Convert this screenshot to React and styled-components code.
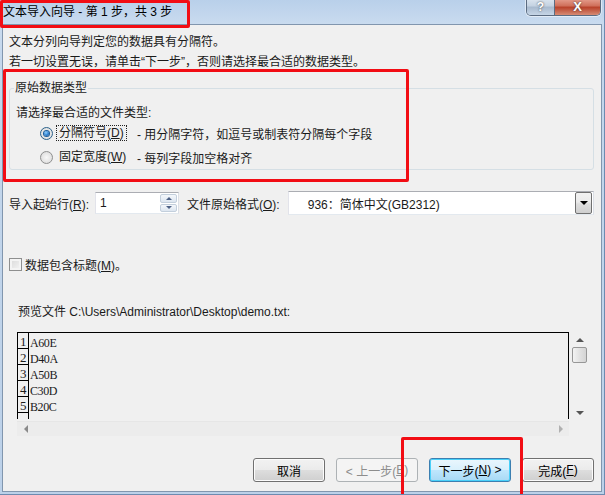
import React from "react";
import styled, { createGlobalStyle, css } from "styled-components";

const GlobalStyle = createGlobalStyle`
  html, body { margin: 0; padding: 0; background: #c4d7ec; }
  body { font-family: "Liberation Sans", "Noto Sans CJK SC", sans-serif; font-size: 12px; color: #1a1a1a; }
`;

const Window = styled.div`
  position: relative;
  width: 605px;
  height: 495px;
  box-sizing: border-box;
  display: flex;
  flex-direction: column;
  overflow: hidden;
  background: linear-gradient(180deg, #b9d0ea 0px, #c9dbef 24px, #c4d7ec 60px, #bcd1e9 100%);
  border-right: 1px solid #6d8bb0;
  border-bottom: 1px solid #6d8bb0;
`;

const TitleBar = styled.div`
  height: 24px;
  flex: none;
  display: flex;
  align-items: flex-start;
  padding: 0 3px 0 3px;
`;

const Title = styled.div`
  flex: 1;
  line-height: 24px;
  font-size: 12px;
  color: #000;
  white-space: pre;
`;

const Caption = styled.div`
  display: flex;
  margin-top: -2px;
  border: 1px solid #5b6b80;
  border-top: none;
  border-radius: 0 0 5px 5px;
  overflow: hidden;
  box-shadow: 0 0 0 1px rgba(255, 255, 255, 0.5);
`;

const CapButton = styled.div`
  height: 17px;
  display: flex;
  align-items: center;
  justify-content: center;
  font-family: "Liberation Sans", sans-serif;
  font-weight: bold;
  color: #fff;
  text-shadow: 0 0 2px #333;
  ${(p) =>
    p.$close
      ? css`
          width: 45px;
          font-size: 13px;
          background: linear-gradient(180deg, #e8a595 0%, #d0715c 45%, #b9432b 55%, #d68b74 100%);
        `
      : css`
          width: 27px;
          font-size: 12px;
          border-right: 1px solid #5b6b80;
          background: linear-gradient(180deg, #dfe8f1 0%, #c5d3e2 45%, #a9bbcf 55%, #c6d5e6 100%);
        `}
`;

const Client = styled.div`
  flex: 1;
  margin: 0 2px 2px 2px;
  border: 1px solid #8196ae;
  background: #f0f0f0;
  display: flex;
  flex-direction: column;
  padding: 7px 7px 9px 6px;
  font-family: "Liberation Sans", "Noto Sans CJK SC", sans-serif;
  font-size: 12px;
`;

const Line = styled.div`
  line-height: 20px;
  white-space: pre;
`;

const Group = styled.fieldset`
  margin: 8px 0 0 0;
  padding: 0;
  border: 1px solid #d5dfe5;
  border-radius: 3px;
  min-width: 0;
`;

const Legend = styled.legend`
  margin-left: 4px;
  padding: 0 1px;
  line-height: 16px;
`;

const GroupBody = styled.div`
  padding: 7px 0 2px 6px;
  display: flex;
  flex-direction: column;
`;

const RadioRow = styled.div`
  display: grid;
  grid-template-columns: 13px 84px auto;
  align-items: center;
  height: 20px;
  padding-left: 24px;
  margin-bottom: ${(p) => (p.$last ? "0" : "4px")};
`;

const Radio = styled.span`
  width: 11px;
  height: 11px;
  border-radius: 50%;
  border: 1px solid ${(p) => (p.$checked ? "#2c628b" : "#8e8f8f")};
  background: radial-gradient(circle at 50% 50%, #f8f8f8 0%, #e4e4e4 60%, #d2d2d2 100%);
  display: flex;
  align-items: center;
  justify-content: center;
  &::after {
    content: "";
    display: ${(p) => (p.$checked ? "block" : "none")};
    width: 5px;
    height: 5px;
    border-radius: 50%;
    background: radial-gradient(circle at 40% 35%, #8ed0ff 0%, #2c7fd0 55%, #0e4a8a 100%);
    box-shadow: 0 0 0 1px #1d5e99;
  }
`;

const RadioLabel = styled.span`
  justify-self: start;
  margin-left: 3px;
  padding: 0 2px;
  line-height: 12px;
  height: 13px;
  border: 1px dotted ${(p) => (p.$focus ? "#222" : "transparent")};
  white-space: pre;
`;

const Acc = styled.span`
  text-decoration: underline;
`;

const FieldRow = styled.div`
  display: flex;
  align-items: center;
  height: 24px;
  margin-top: 21px;
`;

const FieldLabel = styled.span`
  white-space: pre;
  margin-right: ${(p) => p.$gap}px;
`;

const Spin = styled.div`
  width: 84px;
  height: 22px;
  box-sizing: border-box;
  border: 1px solid #abadb3;
  border-color: #abadb3 #dbdfe6 #e3e9ef #e2e3ea;
  background: #fff;
  display: flex;
  align-items: center;
  padding: 0 1px 0 4px;
  margin-right: 8px;
`;

const SpinValue = styled.span`
  flex: 1;
`;

const SpinButtons = styled.div`
  width: 17px;
  height: 18px;
  display: flex;
  flex-direction: column;
  gap: 1px;
`;

const SpinBtn = styled.div`
  flex: 1;
  border: 1px solid #c3cfdc;
  border-radius: 2px;
  background: linear-gradient(180deg, #f4f7fb, #dde6f0);
  display: flex;
  align-items: center;
  justify-content: center;
  &::after {
    content: "";
    border-left: 3px solid transparent;
    border-right: 3px solid transparent;
    ${(p) =>
      p.$up
        ? css`border-bottom: 3px solid #4d6185;`
        : css`border-top: 3px solid #4d6185;`}
  }
`;

const Select = styled.div`
  flex: 1;
  height: 24px;
  box-sizing: border-box;
  border: 1px solid #abadb3;
  border-color: #abadb3 #dbdfe6 #e3e9ef #e2e3ea;
  background: #fff;
  display: flex;
  align-items: center;
  padding: 0 1px 0 19px;
`;

const SelectText = styled.span`
  flex: 1;
  white-space: pre;
`;

const DropBtn = styled.div`
  width: 15px;
  height: 20px;
  border: 1px solid #707070;
  border-radius: 2px;
  background: linear-gradient(180deg, #f2f2f2 0%, #ebebeb 45%, #dddddd 55%, #cfcfcf 100%);
  display: flex;
  align-items: center;
  justify-content: center;
  &::after {
    content: "";
    border-left: 4px solid transparent;
    border-right: 4px solid transparent;
    border-top: 4px solid #000;
  }
`;

const CheckRow = styled.div`
  display: flex;
  align-items: center;
  height: 16px;
  margin-top: 41px;
`;

const Check = styled.span`
  width: 11px;
  height: 11px;
  border: 1px solid #8e8f8f;
  background: linear-gradient(135deg, #d8d8d8, #f6f6f6);
  box-shadow: inset 0 0 0 2px #f4f4f4;
  margin-right: 3px;
`;

const PreviewLabel = styled.div`
  line-height: 20px;
  margin-top: 30px;
  padding-left: 9px;
  white-space: pre;
`;

const Preview = styled.div`
  margin: 10px 0 0 8px;
  width: 571px;
  display: grid;
  grid-template-columns: 552px 19px;
  grid-template-rows: 87px 17px;
`;

const PreviewBox = styled.div`
  border: 1px solid #000;
  border-bottom: none;
  background: #f0f0f0;
  overflow: hidden;
  font-family: "Liberation Serif", serif;
  font-size: 12px;
  letter-spacing: -0.4px;
`;

const DataRow = styled.div`
  display: flex;
  height: 16px;
`;

const RowNum = styled.div`
  width: 11px;
  box-sizing: border-box;
  border-right: 1px solid #000;
  border-bottom: 1px solid #000;
  padding-left: 2px;
  display: flex;
  align-items: flex-end;
  line-height: 12px;
  font-size: 13px;
`;

const RowText = styled.div`
  padding-left: 1px;
  display: flex;
  align-items: flex-end;
  line-height: 12px;
`;

const VScroll = styled.div`
  display: flex;
  flex-direction: column;
  align-items: center;
  padding: 6px 0 4px 2px;
`;

const Arrow = styled.span`
  width: 0;
  height: 0;
  ${(p) =>
    p.$dir === "up" &&
    css`
      border-left: 4px solid transparent;
      border-right: 4px solid transparent;
      border-bottom: 4px solid #555;
    `}
  ${(p) =>
    p.$dir === "down" &&
    css`
      border-left: 4px solid transparent;
      border-right: 4px solid transparent;
      border-top: 4px solid #555;
    `}
  ${(p) =>
    p.$dir === "left" &&
    css`
      border-top: 4px solid transparent;
      border-bottom: 4px solid transparent;
      border-right: 4px solid #8a8a8a;
    `}
  ${(p) =>
    p.$dir === "right" &&
    css`
      border-top: 4px solid transparent;
      border-bottom: 4px solid transparent;
      border-left: 4px solid #b0b0b0;
    `}
`;

const Thumb = styled.div`
  width: 13px;
  height: 14px;
  margin-top: 5px;
  border: 1px solid #979797;
  border-radius: 2px;
  background: linear-gradient(90deg, #f3f3f3, #e2e2e2 50%, #d4d4d4);
`;

const Spacer = styled.div`
  flex: 1;
`;

const HScroll = styled.div`
  display: flex;
  align-items: center;
  padding: 0 6px 0 7px;
  margin-top: 2px;
  border-top: 1px solid #e6e6e6;
  background: #ececec;
  height: 14px;
`;

const Buttons = styled.div`
  margin-top: auto;
  display: flex;
  justify-content: flex-end;
  gap: 11px;
`;

const Button = styled.div`
  width: ${(p) => p.$w}px;
  height: 24px;
  box-sizing: border-box;
  border: 1px solid #707070;
  border-radius: 3px;
  display: flex;
  align-items: center;
  justify-content: center;
  white-space: pre;
  color: #000;
  background: linear-gradient(180deg, #f2f2f2 0%, #ebebeb 48%, #dddddd 52%, #cfcfcf 100%);
  box-shadow: inset 0 0 0 1px #fcfcfc;
  ${(p) =>
    p.$disabled &&
    css`
      border-color: #adb2b5;
      color: #8d8d8d;
      background: #f4f4f4;
      box-shadow: none;
    `}
  ${(p) =>
    p.$default &&
    css`
      border-color: #3c7fb1;
      background: linear-gradient(180deg, #eaf6fd 0%, #d9f0fc 48%, #bee6fd 52%, #a7d9f5 100%);
      box-shadow: inset 0 0 0 1px #48d0f9;
    `}
`;

const Mark = styled.div`
  position: absolute;
  left: ${(p) => p.$x}px;
  top: ${(p) => p.$y}px;
  width: ${(p) => p.$w}px;
  height: ${(p) => p.$h}px;
  border: 3px solid #f20d14;
  border-radius: 2px;
  box-sizing: border-box;
  pointer-events: none;
`;

const rows = ["A60E", "D40A", "A50B", "C30D", "B20C"];

export default function App() {
  return (
    <>
      <GlobalStyle />
      <Window>
        <TitleBar>
          <Title>文本导入向导 - 第 1 步，共 3 步</Title>
          <Caption>
            <CapButton>?</CapButton>
            <CapButton $close>X</CapButton>
          </Caption>
        </TitleBar>
        <Client>
          <Line>文本分列向导判定您的数据具有分隔符。</Line>
          <Line>若一切设置无误，请单击“下一步”，否则请选择最合适的数据类型。</Line>

          <Group>
            <Legend>原始数据类型</Legend>
            <GroupBody>
              <Line>请选择最合适的文件类型:</Line>
              <RadioRow>
                <Radio $checked />
                <span>
                  <RadioLabel $focus>
                    分隔符号(<Acc>D</Acc>)
                  </RadioLabel>
                </span>
                <span>- 用分隔字符，如逗号或制表符分隔每个字段</span>
              </RadioRow>
              <RadioRow $last>
                <Radio />
                <span>
                  <RadioLabel>
                    固定宽度(<Acc>W</Acc>)
                  </RadioLabel>
                </span>
                <span>- 每列字段加空格对齐</span>
              </RadioRow>
            </GroupBody>
          </Group>

          <FieldRow>
            <FieldLabel $gap={6}>
              导入起始行(<Acc>R</Acc>):
            </FieldLabel>
            <Spin>
              <SpinValue>1</SpinValue>
              <SpinButtons>
                <SpinBtn $up />
                <SpinBtn />
              </SpinButtons>
            </Spin>
            <FieldLabel $gap={8}>
              文件原始格式(<Acc>O</Acc>):
            </FieldLabel>
            <Select>
              <SelectText>936：简体中文(GB2312)</SelectText>
              <DropBtn />
            </Select>
          </FieldRow>

          <CheckRow>
            <Check />
            <span>
              数据包含标题(<Acc>M</Acc>)。
            </span>
          </CheckRow>

          <PreviewLabel>预览文件 C:\Users\Administrator\Desktop\demo.txt:</PreviewLabel>
          <Preview>
            <PreviewBox>
              {rows.map((r, i) => (
                <DataRow key={r}>
                  <RowNum>{i + 1}</RowNum>
                  <RowText>{r}</RowText>
                </DataRow>
              ))}
              <DataRow>
                <RowNum />
              </DataRow>
            </PreviewBox>
            <VScroll>
              <Arrow $dir="up" />
              <Thumb />
              <Spacer />
              <Arrow $dir="down" />
            </VScroll>
            <HScroll>
              <Arrow $dir="left" />
              <Spacer />
              <Arrow $dir="right" />
            </HScroll>
          </Preview>

          <Buttons>
            <Button $w={72}>取消</Button>
            <Button $w={82} $disabled>
              {"< 上一步("}
              <Acc>B</Acc>)
            </Button>
            <Button $w={82} $default>
              下一步(<Acc>N</Acc>)
              {" >"}
            </Button>
            <Button $w={72}>
              完成(<Acc>F</Acc>)
            </Button>
          </Buttons>
        </Client>

        <Mark $x={0} $y={0} $w={190} $h={28} />
        <Mark $x={3} $y={69} $w={406} $h={113} />
        <Mark $x={401} $y={437} $w={122} $h={62} />
      </Window>
    </>
  );
}
